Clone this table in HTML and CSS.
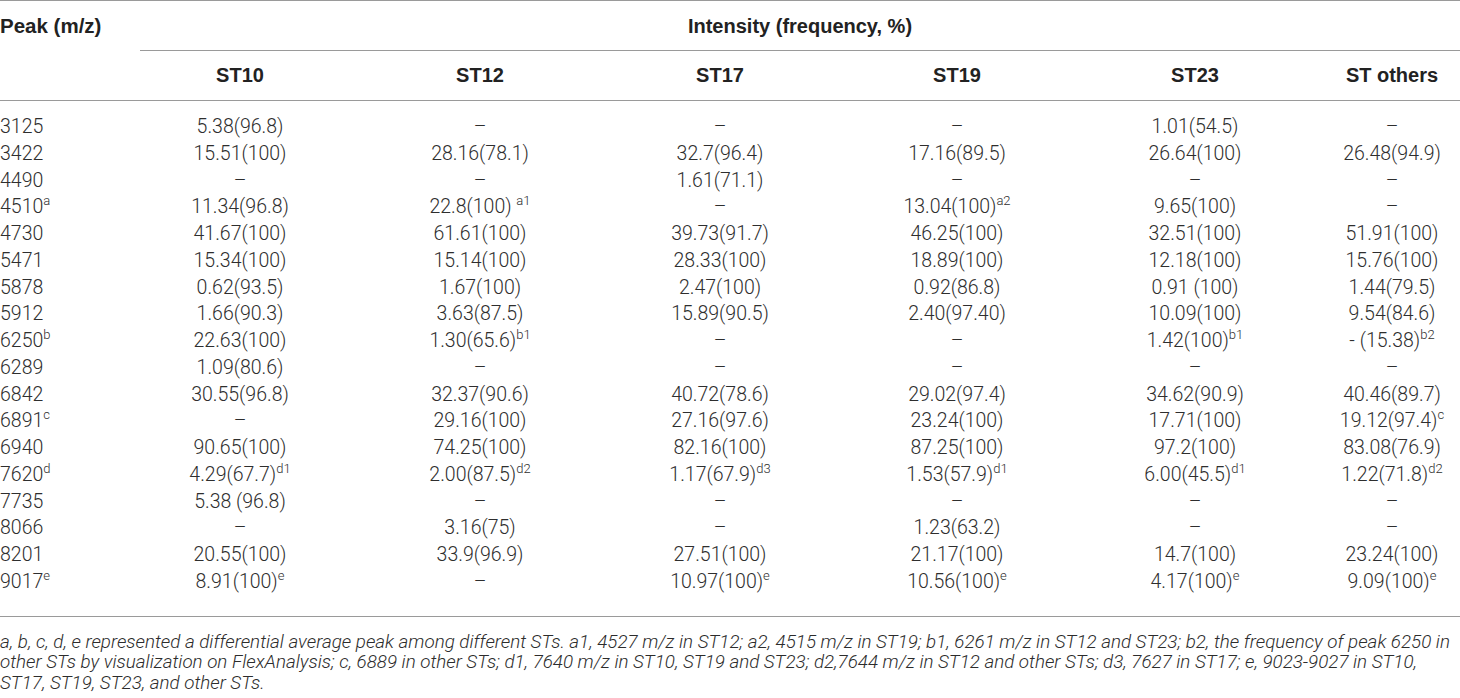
FILE: index.html
```html
<!DOCTYPE html>
<html lang="en">
<head>
    <meta charset="UTF-8">
    <title>Peak intensity by ST</title>
    <link rel="stylesheet" href="styles.css">
</head>
<body>
    <div class="sheet">
        <table class="peaks">
            <colgroup>
                <col class="c-peak">
                <col class="c-st">
                <col class="c-st">
                <col class="c-st">
                <col class="c-st19">
                <col class="c-st23">
                <col class="c-other">
            </colgroup>
            <thead>
                <tr class="head-top">
                    <th class="peak">Peak (m/z)</th>
                    <th class="group" colspan="6"><span>Intensity (frequency, %)</span></th>
                </tr>
                <tr class="head-sub">
                    <th></th>
                    <th>ST10</th>
                    <th>ST12</th>
                    <th>ST17</th>
                    <th>ST19</th>
                    <th>ST23</th>
                    <th class="other">ST others</th>
                </tr>
            </thead>
            <tbody>
                <tr><td>3125</td><td>5.38(96.8)</td><td>–</td><td>–</td><td>–</td><td>1.01(54.5)</td><td class="other">–</td></tr>
                <tr><td>3422</td><td>15.51(100)</td><td>28.16(78.1)</td><td>32.7(96.4)</td><td>17.16(89.5)</td><td>26.64(100)</td><td class="other">26.48(94.9)</td></tr>
                <tr><td>4490</td><td>–</td><td>–</td><td>1.61(71.1)</td><td>–</td><td>–</td><td class="other">–</td></tr>
                <tr><td>4510<sup>a</sup></td><td>11.34(96.8)</td><td>22.8(100) <sup>a1</sup></td><td>–</td><td>13.04(100)<sup>a2</sup></td><td>9.65(100)</td><td class="other">–</td></tr>
                <tr><td>4730</td><td>41.67(100)</td><td>61.61(100)</td><td>39.73(91.7)</td><td>46.25(100)</td><td>32.51(100)</td><td class="other">51.91(100)</td></tr>
                <tr><td>5471</td><td>15.34(100)</td><td>15.14(100)</td><td>28.33(100)</td><td>18.89(100)</td><td>12.18(100)</td><td class="other">15.76(100)</td></tr>
                <tr><td>5878</td><td>0.62(93.5)</td><td>1.67(100)</td><td>2.47(100)</td><td>0.92(86.8)</td><td>0.91 (100)</td><td class="other">1.44(79.5)</td></tr>
                <tr><td>5912</td><td>1.66(90.3)</td><td>3.63(87.5)</td><td>15.89(90.5)</td><td>2.40(97.40)</td><td>10.09(100)</td><td class="other">9.54(84.6)</td></tr>
                <tr><td>6250<sup>b</sup></td><td>22.63(100)</td><td>1.30(65.6)<sup>b1</sup></td><td>–</td><td>–</td><td>1.42(100)<sup>b1</sup></td><td class="other">- (15.38)<sup>b2</sup></td></tr>
                <tr><td>6289</td><td>1.09(80.6)</td><td>–</td><td>–</td><td>–</td><td>–</td><td class="other">–</td></tr>
                <tr><td>6842</td><td>30.55(96.8)</td><td>32.37(90.6)</td><td>40.72(78.6)</td><td>29.02(97.4)</td><td>34.62(90.9)</td><td class="other">40.46(89.7)</td></tr>
                <tr><td>6891<sup>c</sup></td><td>–</td><td>29.16(100)</td><td>27.16(97.6)</td><td>23.24(100)</td><td>17.71(100)</td><td class="other">19.12(97.4)<sup>c</sup></td></tr>
                <tr><td>6940</td><td>90.65(100)</td><td>74.25(100)</td><td>82.16(100)</td><td>87.25(100)</td><td>97.2(100)</td><td class="other">83.08(76.9)</td></tr>
                <tr><td>7620<sup>d</sup></td><td>4.29(67.7)<sup>d1</sup></td><td>2.00(87.5)<sup>d2</sup></td><td>1.17(67.9)<sup>d3</sup></td><td>1.53(57.9)<sup>d1</sup></td><td>6.00(45.5)<sup>d1</sup></td><td class="other">1.22(71.8)<sup>d2</sup></td></tr>
                <tr><td>7735</td><td>5.38 (96.8)</td><td>–</td><td>–</td><td>–</td><td>–</td><td class="other">–</td></tr>
                <tr><td>8066</td><td>–</td><td>3.16(75)</td><td>–</td><td>1.23(63.2)</td><td>–</td><td class="other">–</td></tr>
                <tr><td>8201</td><td>20.55(100)</td><td>33.9(96.9)</td><td>27.51(100)</td><td>21.17(100)</td><td>14.7(100)</td><td class="other">23.24(100)</td></tr>
                <tr><td>9017<sup>e</sup></td><td>8.91(100)<sup>e</sup></td><td>–</td><td>10.97(100)<sup>e</sup></td><td>10.56(100)<sup>e</sup></td><td>4.17(100)<sup>e</sup></td><td class="other">9.09(100)<sup>e</sup></td></tr>
            </tbody>
        </table>
        <p class="notes">a, b, c, d, e represented a differential average peak among different STs. a1, 4527 m/z in ST12; a2, 4515 m/z in ST19; b1, 6261 m/z in ST12 and ST23; b2, the frequency of peak 6250 in<br>other STs by visualization on FlexAnalysis; c, 6889 in other STs; d1, 7640 m/z in ST10, ST19 and ST23; d2,7644 m/z in ST12 and other STs; d3, 7627 in ST17; e, 9023-9027 in ST10,<br>ST17, ST19, ST23, and other STs.</p>
    </div>
</body>
</html>
```

FILE: styles.css
```css
* {
    margin: 0;
    padding: 0;
}
body {
    background: #fff;
    color: #2e2e2e;
    font-family: Roboto, "Liberation Sans", sans-serif;
    font-weight: 300;
}
.sheet {
    width: 1460px;
}
.peaks {
    width: 1460px;
    table-layout: fixed;
    border-collapse: separate;
    border-spacing: 0;
    border-top: 1px solid #9a9a9a;
    border-bottom: 1px solid #9a9a9a;
    font-size: 19.5px;
}
.c-peak { width: 120px; }
.c-st { width: 240px; }
.c-st19 { width: 234px; }
.c-st23 { width: 242px; }
.c-other { width: 144px; }

.peaks th {
    height: 49px;
    padding: 0;
    font-family: "Liberation Sans", Arial, sans-serif;
    font-size: 20px;
    font-weight: bold;
    color: #222;
    text-align: center;
    vertical-align: middle;
}
.peaks th.peak {
    text-align: left;
    font-size: 20.5px;
}
.peaks th.group {
    vertical-align: top;
}
.peaks th.group span {
    display: block;
    height: 49px;
    line-height: 51px;
    margin-left: 20px;
    border-bottom: 1px solid #9a9a9a;
}
.head-sub th {
    border-bottom: 1px solid #9a9a9a;
}
.peaks th.other {
    padding-left: 8px;
}

.peaks td {
    height: 26.75px;
    line-height: 26.75px;
    padding: 0;
    text-align: center;
    white-space: nowrap;
}
.peaks td:first-child {
    text-align: left;
}
.peaks td.other {
    padding-left: 8px;
}
.peaks tbody tr:first-child td {
    padding-top: 13px;
}
.peaks tbody tr:last-child td {
    padding-bottom: 20px;
}
sup {
    font-size: 13px;
    line-height: 0;
    vertical-align: 8px;
}

.notes {
    padding-top: 15px;
    font-size: 18.8px;
    font-style: italic;
    line-height: 20.5px;
    white-space: nowrap;
    color: #2c2c2c;
}
```
